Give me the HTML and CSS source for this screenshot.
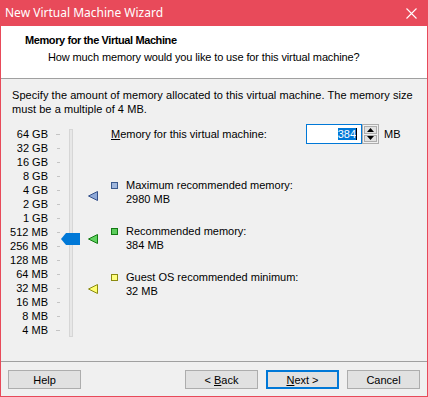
FILE: index.html
```html
<!DOCTYPE html>
<html lang="en">
<head>
    <meta charset="UTF-8">
    <title>New Virtual Machine Wizard</title>
    <link rel="stylesheet" href="styles.css">
</head>
<body>
    <div class="window">
        <div class="titlebar">
            <span class="title">New Virtual Machine Wizard</span>
            <svg class="close" width="11" height="11" viewBox="0 0 11 11">
                <path d="M0.5 0.5 L10.5 10.5 M10.5 0.5 L0.5 10.5" stroke="#fff" stroke-width="1.1"/>
            </svg>
        </div>

        <div class="header">
            <div class="header-title">Memory for the Virtual Machine</div>
            <div class="header-sub">How much memory would you like to use for this virtual machine?</div>
        </div>

        <div class="body">
            <p class="intro">Specify the amount of memory allocated to this virtual machine. The memory size must be a multiple of 4 MB.</p>

            <div class="content">
                <div class="scale">
                    <div class="ticks">
                        <div class="tick-row"><span class="tick-label">64 GB</span><span class="tick long"></span></div>
                        <div class="tick-row"><span class="tick-label">32 GB</span><span class="tick"></span></div>
                        <div class="tick-row"><span class="tick-label">16 GB</span><span class="tick"></span></div>
                        <div class="tick-row"><span class="tick-label">8 GB</span><span class="tick"></span></div>
                        <div class="tick-row"><span class="tick-label">4 GB</span><span class="tick"></span></div>
                        <div class="tick-row"><span class="tick-label">2 GB</span><span class="tick"></span></div>
                        <div class="tick-row"><span class="tick-label">1 GB</span><span class="tick"></span></div>
                        <div class="tick-row"><span class="tick-label">512 MB</span><span class="tick"></span></div>
                        <div class="tick-row"><span class="tick-label">256 MB</span><span class="tick"></span></div>
                        <div class="tick-row"><span class="tick-label">128 MB</span><span class="tick"></span></div>
                        <div class="tick-row"><span class="tick-label">64 MB</span><span class="tick"></span></div>
                        <div class="tick-row"><span class="tick-label">32 MB</span><span class="tick"></span></div>
                        <div class="tick-row"><span class="tick-label">16 MB</span><span class="tick"></span></div>
                        <div class="tick-row"><span class="tick-label">8 MB</span><span class="tick"></span></div>
                        <div class="tick-row"><span class="tick-label">4 MB</span><span class="tick long"></span></div>
                    </div>
                    <div class="track"></div>

                    <svg class="thumb" width="19" height="12" viewBox="0 0 19 12">
                        <polygon points="0,6 5,0 19,0 19,12 5,12" fill="#0078d7"/>
                    </svg>
                    <svg class="marker marker-max" width="10" height="10" viewBox="0 0 10 10">
                        <polygon points="0.5,5 9.5,0.5 9.5,9.5" fill="#8fa9d8" stroke="#34508a"/>
                    </svg>
                    <svg class="marker marker-rec" width="10" height="10" viewBox="0 0 10 10">
                        <polygon points="0.5,5 9.5,0.5 9.5,9.5" fill="#5fd25f" stroke="#137a13"/>
                    </svg>
                    <svg class="marker marker-min" width="10" height="10" viewBox="0 0 10 10">
                        <polygon points="0.5,5 9.5,0.5 9.5,9.5" fill="#ffff70" stroke="#8a8a10"/>
                    </svg>
                </div>

                <div class="settings">
                    <div class="mem-row">
                        <label class="mem-label"><u>M</u>emory for this virtual machine:</label>
                        <div class="spin">
                            <div class="spin-input"><span class="sel">384</span><span class="caret"></span></div>
                            <div class="spin-buttons">
                                <div class="spin-btn">
                                    <svg width="7" height="4" viewBox="0 0 7 4"><polygon points="3.5,0 7,4 0,4" fill="#000"/></svg>
                                </div>
                                <div class="spin-btn">
                                    <svg width="7" height="4" viewBox="0 0 7 4"><polygon points="0,0 7,0 3.5,4" fill="#000"/></svg>
                                </div>
                            </div>
                        </div>
                        <span class="unit">MB</span>
                    </div>

                    <div class="legend">
                        <div class="legend-item">
                            <span class="swatch swatch-max"></span>
                            <div>
                                <div>Maximum recommended memory:</div>
                                <div>2980 MB</div>
                            </div>
                        </div>
                        <div class="legend-item">
                            <span class="swatch swatch-rec"></span>
                            <div>
                                <div>Recommended memory:</div>
                                <div>384 MB</div>
                            </div>
                        </div>
                        <div class="legend-item">
                            <span class="swatch swatch-min"></span>
                            <div>
                                <div>Guest OS recommended minimum:</div>
                                <div>32 MB</div>
                            </div>
                        </div>
                    </div>
                </div>
            </div>
        </div>

        <div class="footer">
            <button class="btn">Help</button>
            <div class="nav-buttons">
                <button class="btn">&lt; <u>B</u>ack</button>
                <button class="btn btn-default"><u>N</u>ext &gt;</button>
                <button class="btn">Cancel</button>
            </div>
        </div>
    </div>
</body>
</html>
```

FILE: styles.css
```css
* {
    box-sizing: border-box;
    margin: 0;
    padding: 0;
}
body {
    background: #f0f0f0;
    font-family: 'Liberation Sans', Arial, sans-serif;
    font-size: 11px;
    color: #000;
}
.window {
    width: 428px;
    height: 397px;
    display: flex;
    flex-direction: column;
    border: 1px solid #e84a5a;
    border-top: none;
    background: #f0f0f0;
}
.titlebar {
    height: 26px;
    margin: 0 -1px;
    background: #e84a5a;
    color: #fff;
    display: flex;
    align-items: center;
    justify-content: space-between;
    padding: 0 11px 1px 5px;
}
.title {
    font-family: 'Noto Sans', sans-serif;
    font-size: 12px;
}
.close {
    display: block;
    margin-top: 1px;
}
.header {
    height: 53px;
    background: #fff;
    border-bottom: 1px solid #a0a0a0;
    padding: 7px 0 0 24px;
    line-height: 14px;
}
.header-title {
    font-weight: bold;
    letter-spacing: -0.4px;
}
.header-sub {
    margin-top: 3px;
    padding-left: 23px;
    letter-spacing: -0.12px;
}
.body {
    flex: 1;
    padding: 9px 11px 0 11px;
}
.intro {
    line-height: 14px;
    letter-spacing: 0.06px;
}
/* slider + settings */
.content {
    display: flex;
    margin-top: 8px;
}
.scale {
    position: relative;
    width: 103px;
    margin-left: -4px;
    flex-shrink: 0;
    display: flex;
    margin-top: 3px;
}
.tick-row {
    display: flex;
    align-items: center;
    height: 14px;
}
.tick-label {
    width: 40px;
    text-align: right;
    white-space: nowrap;
}
.tick {
    width: 3px;
    height: 1px;
    margin-left: 9px;
    background: #c4c4c4;
}
.tick.long {
    width: 4px;
    margin-left: 8px;
}
.track {
    width: 4px;
    height: 208px;
    margin: 2px 0 0 9px;
    background: #e7e7e7;
    border: 1px solid #d6d6d6;
}
.thumb {
    position: absolute;
    left: 53px;
    top: 106px;
}
.marker {
    position: absolute;
    left: 80px;
}
.marker-max { top: 64px; }
.marker-rec { top: 107px; }
.marker-min { top: 157px; }

.settings {
    flex: 1;
}
.mem-row {
    display: flex;
    align-items: center;
    height: 20px;
}
.mem-label {
    width: 195px;
}
.spin {
    display: flex;
    height: 20px;
}
.spin-input {
    width: 56px;
    border: 1px solid #0078d7;
    background: #fff;
    display: flex;
    align-items: center;
    justify-content: flex-end;
    padding-right: 4px;
}
.sel {
    background: #0078d7;
    color: #fff;
    line-height: 12px;
}
.caret {
    width: 1px;
    height: 12px;
    background: #000;
}
.spin-buttons {
    width: 17px;
    display: flex;
    flex-direction: column;
    border: 1px solid #adadad;
    padding: 1px;
    gap: 1px;
    background: #f0f0f0;
}
.spin-btn {
    flex: 1;
    display: flex;
    align-items: center;
    justify-content: center;
    background: #e1e1e1;
    border: 1px solid #adadad;
}
.spin-btn svg {
    display: block;
}
.unit {
    margin-left: 5px;
}
.legend {
    display: flex;
    flex-direction: column;
    gap: 18px;
    margin-top: 34px;
    line-height: 14px;
}
.legend-item {
    display: flex;
    gap: 8px;
}
.swatch {
    width: 7px;
    height: 7px;
    margin-top: 4px;
    flex-shrink: 0;
    border: 1px solid;
}
.swatch-max {
    background: #9fb6dc;
    border-color: #3b5a8e;
}
.swatch-rec {
    background: #5ccc5c;
    border-color: #137a13;
}
.swatch-min {
    background: #ffff80;
    border-color: #8a8a10;
}
/* bottom buttons */
.footer {
    height: 35px;
    border-top: 1px solid #a0a0a0;
    display: flex;
    justify-content: space-between;
    padding: 8px 7px 0 7px;
}
.nav-buttons {
    display: flex;
    gap: 8px;
}
.btn {
    width: 73px;
    height: 19px;
    font-family: 'Liberation Sans', Arial, sans-serif;
    font-size: 11px;
    color: #000;
    background: #e1e1e1;
    border: 1px solid #adadad;
}
.btn-default {
    border: 2px solid #0078d7;
}
```
